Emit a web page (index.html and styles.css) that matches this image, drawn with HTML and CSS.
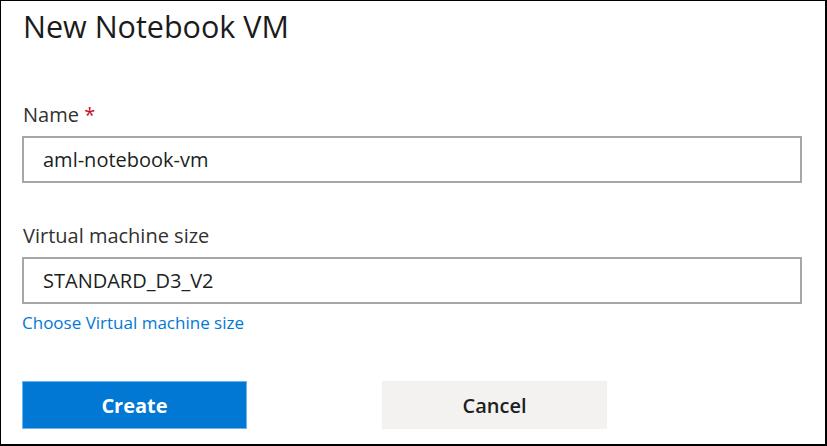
FILE: index.html
```html
<!DOCTYPE html>
<html>
<head>
<meta charset="utf-8">
<link rel="stylesheet" href="styles.css">
</head>
<body>
<div class="panel">
  <h1 class="title">New Notebook VM</h1>
  <div class="field field-name">
    <label class="label">Name <span class="req">*</span></label>
    <div class="input">aml-notebook-vm</div>
  </div>
  <div class="field field-size">
    <label class="label">Virtual machine size</label>
    <div class="input">STANDARD_D3_V2</div>
    <a class="link">Choose Virtual machine size</a>
  </div>
  <div class="actions">
    <button class="btn btn-primary">Create</button>
    <button class="btn btn-secondary">Cancel</button>
  </div>
</div>
</body>
</html>
```

FILE: styles.css
```css
* { box-sizing: border-box; }
html, body { margin: 0; padding: 0; background: #fff; }
body { font-family: "Open Sans", "Noto Sans", sans-serif; color: #222; }
.panel {
  width: 827px;
  height: 446px;
  border-style: solid;
  border-color: #000;
  border-width: 1px 2px 2px 1px;
  padding: 0 23px 0 21px;
  display: flex;
  flex-direction: column;
}
.title {
  margin: 6px 0 0 1px;
  font-size: 30.5px;
  font-weight: 400;
  line-height: 39px;
  color: #1b1b1b;
}
.field { display: flex; flex-direction: column; align-items: stretch; }
.field-name { margin-top: 56px; }
.field-size { margin-top: 40px; }
.label {
  font-size: 20px;
  line-height: 26px;
  color: #323130;
  margin-left: 1px;
}
.req { color: #c50f1f; }
.input {
  margin-top: 8px;
  height: 47px;
  border: 2px solid #a6a6a6;
  padding: 0 0 0 19px;
  font-size: 20px;
  line-height: 43px;
  color: #201f1e;
}
.link {
  align-self: flex-start;
  margin-top: 8px;
  font-size: 17px;
  line-height: 22px;
  color: #0078d4;
}
.actions {
  margin-top: 47px;
  display: flex;
  gap: 135px;
}
.btn {
  width: 225px;
  height: 48px;
  border: none;
  font-family: "Open Sans", "Noto Sans", sans-serif;
  font-size: 20px;
  font-weight: 600;
  padding: 0;
}
.btn-primary { background: #0078d4; color: #fff; border: 1px solid #6fb4ef; font-weight: 700; }
.btn-secondary { background: #f3f2f1; color: #201f1e; border: 1px solid #f0f0f0; }
```
